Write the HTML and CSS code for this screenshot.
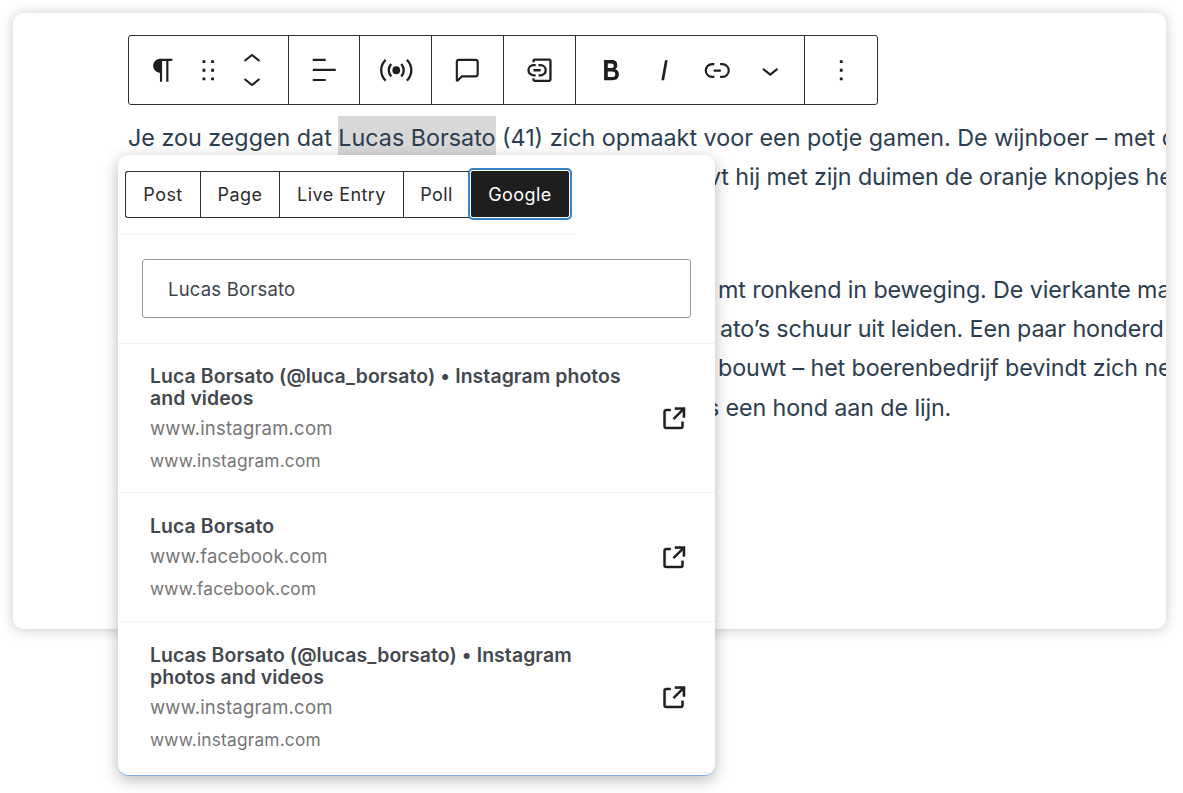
FILE: index.html
```html
<!DOCTYPE html>
<html lang="nl">
<head>
<meta charset="utf-8">
<title>Editor</title>
<link rel="stylesheet" href="styles.css">
</head>
<body>
<div class="page">
  <main class="card">
    <div class="toolbar">
      <div class="group group-block">
        <span class="tool tool-para"><svg class="icon" viewBox="0 0 24 24"><path d="M18.3 4H9.9v-.1l-.9.2c-2.3.4-4 2.4-4 4.8s1.7 4.4 4 4.8l.7.1V20h1.5V5.5h2.9V20h1.5V5.5h2.7V4z"/></svg></span>
        <span class="tool tool-drag"><svg class="icon" viewBox="0 0 24 24"><path d="M8 7h2V5H8v2zm0 6h2v-2H8v2zm0 6h2v-2H8v2zm6-14v2h2V5h-2zm0 8h2v-2h-2v2zm0 6h2v-2h-2v2z"/></svg></span>
        <span class="tool tool-move">
          <svg class="chev" viewBox="0 0 20 12"><path d="M2.500 9 10 3l7.500 6"/></svg>
          <svg class="chev" viewBox="0 0 20 12"><path d="M2.500 3 10 9l7.500-6"/></svg>
        </span>
      </div>
      <div class="group group-single"><svg class="icon" viewBox="0 0 24 24"><path d="M13 5.5H4V4h9v1.5Zm7 7H4V11h16v1.5Zm-7 7H4V18h9v1.5Z"/></svg></div>
      <div class="group group-single"><svg class="icon" viewBox="0 0 24 24"><circle cx="12" cy="12" r="2.700"/><path class="line-icon" d="M8.500 7.600a6.500 6.500 0 0 0 0 8.800M15.500 7.600a6.500 6.500 0 0 1 0 8.800M4.600 4.800a10 10 0 0 0 0 14.400M19.400 4.800a10 10 0 0 1 0 14.400"/></svg></div>
      <div class="group group-single"><svg class="icon" viewBox="0 0 24 24"><path d="M18 4H6c-1.100 0-2 .9-2 2v12.900c0 .6.5 1.100 1.100 1.100.3 0 .5-.1.8-.3L8.500 17H18c1.100 0 2-.9 2-2V6c0-1.100-.9-2-2-2zm.5 11c0 .3-.2.5-.5.5H7.900l-2.400 2.400V6c0-.3.2-.5.5-.5h12c.3 0 .5.2.5.5v9z"/></svg></div>
      <div class="group group-single"><svg class="icon" viewBox="0 0 24 24"><path class="line-icon" d="M8 6.500V5.500c0-.5.4-.9.9-.9h10c.5 0 .9.4.9.9v13c0 .5-.4.9-.9.9h-10a.9.9 0 0 1-.9-.9v-1M9.500 8.500H8a3.500 3.500 0 0 0 0 7h1.500M11.500 8.500H13a3.500 3.500 0 0 1 0 7h-1.500M8 12h5"/></svg></div>
      <div class="group group-format">
        <span class="tool tool-format"><svg class="icon" viewBox="0 0 24 24"><path d="M14.700 11.300c1-.6 1.500-1.600 1.500-3 0-2.300-1.300-3.400-4-3.400H7v14h5.800c1.400 0 2.500-.3 3.300-1 .8-.7 1.200-1.700 1.200-2.900.1-1.900-.8-3.100-2.600-3.700zm-5.100-4h2.300c.6 0 1.100.1 1.400.4.3.3.5.7.5 1.200s-.2 1-.5 1.200c-.3.3-.8.4-1.400.4H9.600V7.300zm4.600 9c-.4.3-1 .4-1.700.4H9.600v-3.900h2.900c.7 0 1.300.2 1.700.5.4.3.6.8.6 1.500s-.2 1.200-.6 1.500z"/></svg></span>
        <span class="tool tool-format"><svg class="icon" viewBox="0 0 24 24"><path d="M12.500 5L10 19h1.900l2.500-14z"/></svg></span>
        <span class="tool tool-format"><svg class="icon" viewBox="0 0 24 24"><path d="M10 17.389H8.444A5.194 5.194 0 1 1 8.444 7H10v1.500H8.444a3.694 3.694 0 0 0 0 7.389H10v1.500ZM14 7h1.556a5.194 5.194 0 0 1 0 10.390H14v-1.500h1.556a3.694 3.694 0 0 0 0-7.390H14V7Zm-4.500 6h5v-1.500h-5V13Z"/></svg></span>
        <span class="tool tool-format"><svg class="icon" viewBox="0 0 24 24"><path d="M17.500 11.600L12 16l-5.500-4.400.9-1.200L12 14l4.500-3.600 1 1.200z"/></svg></span>
      </div>
      <div class="group group-single"><svg class="icon" viewBox="0 0 24 24"><path d="M13 19h-2v-2h2v2zm0-6h-2v-2h2v2zm0-6h-2V5h2v2z"/></svg></div>
    </div>

    <div class="article">
      <p class="para">
        <span class="line">Je zou zeggen dat <span class="selected">Lucas Borsato</span> (41) zich opmaakt voor een potje gamen. De wijnboer – met de</span>
        <span class="line tail tail-a">vt hij met zijn duimen de oranje knopjes heen</span>
      </p>
      <p class="para para-second">
        <span class="line tail tail-b">mt ronkend in beweging. De vierkante machine</span>
        <span class="line tail tail-c">ato’s schuur uit leiden. Een paar honderd meter</span>
        <span class="line tail tail-d">bouwt – het boerenbedrijf bevindt zich net</span>
        <span class="line tail tail-e">s een hond aan de lijn.</span>
      </p>
    </div>
  </main>

  <section class="popup">
    <div class="tabs-row">
      <div class="tabs">
        <span class="tab tab-post">Post</span>
        <span class="tab tab-page">Page</span>
        <span class="tab tab-live">Live Entry</span>
        <span class="tab tab-poll">Poll</span>
        <span class="tab tab-active">Google</span>
      </div>
    </div>
    <div class="search">
      <div class="search-input">Lucas Borsato</div>
    </div>
    <ul class="results">
      <li class="result result-tall">
        <div class="result-text">
          <div class="result-title">Luca Borsato (@luca_borsato) • Instagram photos and videos</div>
          <div class="result-url">www.instagram.com</div>
          <div class="result-url-second">www.instagram.com</div>
        </div>
        <svg class="ext" viewBox="0 0 24 24"><path d="M19.500 4.500h-7V6h4.440l-5.970 5.970 1.060 1.060L18 7.060v4.440h1.500v-7Zm-13 1a2 2 0 0 0-2 2v10a2 2 0 0 0 2 2h10a2 2 0 0 0 2-2v-3H17v3a.5.5 0 0 1-.5.5h-10a.5.5 0 0 1-.5-.5v-10a.5.5 0 0 1 .5-.5h3V5.500h-3Z"/></svg>
      </li>
      <li class="result result-short">
        <div class="result-text">
          <div class="result-title">Luca Borsato</div>
          <div class="result-url">www.facebook.com</div>
          <div class="result-url-second">www.facebook.com</div>
        </div>
        <svg class="ext" viewBox="0 0 24 24"><path d="M19.500 4.500h-7V6h4.440l-5.970 5.970 1.060 1.060L18 7.060v4.440h1.500v-7Zm-13 1a2 2 0 0 0-2 2v10a2 2 0 0 0 2 2h10a2 2 0 0 0 2-2v-3H17v3a.5.5 0 0 1-.5.5h-10a.5.5 0 0 1-.5-.5v-10a.5.5 0 0 1 .5-.5h3V5.500h-3Z"/></svg>
      </li>
      <li class="result result-last">
        <div class="result-text">
          <div class="result-title">Lucas Borsato (@lucas_borsato) • Instagram photos and videos</div>
          <div class="result-url">www.instagram.com</div>
          <div class="result-url-second">www.instagram.com</div>
        </div>
        <svg class="ext" viewBox="0 0 24 24"><path d="M19.500 4.500h-7V6h4.440l-5.970 5.970 1.060 1.060L18 7.060v4.440h1.500v-7Zm-13 1a2 2 0 0 0-2 2v10a2 2 0 0 0 2 2h10a2 2 0 0 0 2-2v-3H17v3a.5.5 0 0 1-.5.5h-10a.5.5 0 0 1-.5-.5v-10a.5.5 0 0 1 .5-.5h3V5.500h-3Z"/></svg>
      </li>
    </ul>
  </section>
</div>
</body>
</html>
```

FILE: styles.css
```css
* { box-sizing: border-box; }
html, body { margin: 0; padding: 0; background: #fff; }
body { font-family: Inter, "Liberation Sans", sans-serif; overflow: hidden; }

.page { position: relative; width: 1183px; height: 793px; padding: 13px 17px 0 13px; }

.card {
  height: 616px;
  padding: 22px 0 0 115px;
  background: #fff;
  border-radius: 10px;
  box-shadow: 0 1px 13px rgba(0, 0, 0, .22);
  overflow: hidden;
}

/* toolbar */
.toolbar {
  display: flex;
  width: 750px;
  height: 70px;
  border: 1.5px solid #2f2f2f;
  border-radius: 3px;
}
.group { display: flex; align-items: center; border-right: 1.5px solid #2f2f2f; }
.group:last-child { border-right: 0; }
.group-block { width: 160px; }
.group-single { width: 72px; justify-content: center; }
.group-format { width: 230px; padding-left: 9px; }
.tool { display: flex; align-items: center; justify-content: center; }
.tool-para { width: 68px; }
.tool-drag { width: 22px; }
.tool-move { width: 66px; flex-direction: column; gap: 12px; }
.tool-format { width: 53px; }
.icon { width: 34.500px; height: 34.500px; fill: #1e1e1e; display: block; flex: none; }
.icon .line-icon { fill: none; stroke: #1e1e1e; stroke-width: 1.600; }
.chev { width: 20px; height: 12px; fill: none; stroke: #1e1e1e; stroke-width: 2.100; display: block; }

/* article */
.article { padding-top: 12.500px; color: #2c3d50; font-size: 23.300px; line-height: 39.200px; }
.para { margin: 0; height: 118px; }
.para-second { margin-top: 34.500px; }
.line { display: block; white-space: nowrap; }
.selected { background: #d8d8d8; padding: 7px 0; }
.tail { letter-spacing: -.12px; }
.tail-a { padding-left: 580px; }
.tail-b { padding-left: 590px; }
.tail-c { padding-left: 592px; }
.tail-d { padding-left: 590px; }
.tail-e { padding-left: 579px; }

/* popup */
.popup {
  position: absolute;
  left: 118px;
  top: 155px;
  width: 597px;
  height: 621px;
  background: #fff;
  border-radius: 10px;
  border-bottom: 1px solid #86aee6;
  box-shadow: 0 4px 16px rgba(0, 0, 0, .28);
  overflow: hidden;
  color: #3c434a;
}
.tabs-row { width: 458px; height: 80px; padding: 16px 0 0 7px; border-bottom: 1.500px solid #f1f1f1; }
.tabs { display: flex; height: 47px; }
.tab {
  display: flex; align-items: center; justify-content: center;
  font-size: 18px; letter-spacing: .45px; color: #2c2c2c;
  border: 1.500px solid #2f2f2f; border-right: 0;
}
.tab-post { width: 75px; border-radius: 3px 0 0 3px; }
.tab-page { width: 79px; }
.tab-live { width: 124px; }
.tab-poll { width: 66px; }
.tab-active {
  width: 98px;
  height: 46px;
  margin-left: 2px;
  color: #fff;
  background: #1e1e1e;
  border: 0;
  border-radius: 2px;
  box-shadow: 0 0 0 1px #fff, 0 0 0 3px #3582c4;
}

.search { height: 109px; padding: 24px 24px 0; border-bottom: 1.500px solid #f1f1f1; }
.search-input {
  height: 59px;
  display: flex; align-items: center;
  padding-left: 25px;
  font-size: 18.500px; letter-spacing: .2px;
  border: 1.500px solid #9a9a9a;
  border-radius: 3px;
  color: #3c434a;
}

.results { list-style: none; margin: 0; padding: 0; }
.result {
  display: flex; align-items: center; justify-content: space-between;
  padding: 0 24px 0 32px;
  border-bottom: 1.500px solid #f1f1f1;
}
.result-tall { height: 149px; }
.result-short { height: 129px; }
.result-last { height: 151px; }
.result-text { width: 480px; padding-top: 1px; }
.result-title { font-size: 19.400px; line-height: 22px; font-weight: 600; letter-spacing: .1px; color: #43484e; }
.result-url { font-size: 18.500px; line-height: 24px; margin-top: 7px; letter-spacing: .2px; color: #757575; }
.result-url-second { font-size: 17.300px; line-height: 24px; margin-top: 9px; letter-spacing: .2px; color: #757575; }
.ext { width: 34.500px; height: 34.500px; fill: #1e1e1e; stroke: #1e1e1e; stroke-width: .3; flex: none; }
```
